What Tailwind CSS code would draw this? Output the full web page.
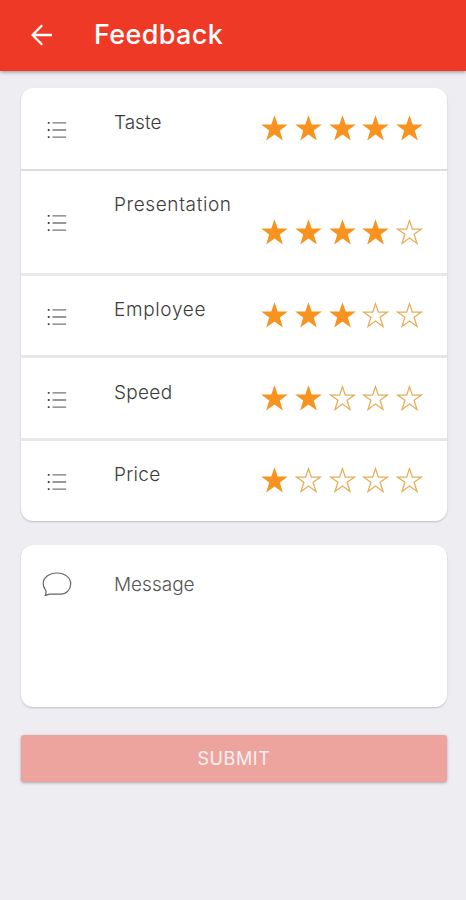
<!DOCTYPE html>
<html lang="en">
<head>
<meta charset="utf-8">
<title>Feedback</title>
<script src="https://cdn.jsdelivr.net/npm/@tailwindcss/browser@4"></script>
</head>
<body class="h-[900px] overflow-hidden bg-[#eeeef2] font-['Inter','Open_Sans',sans-serif] text-[#3c3c3c]">
<svg class="hidden">
  <symbol id="list" viewBox="0 0 20 18"><path d="M5.5 1.8H19.2M5.5 9H19.2M5.5 16.2H19.2" fill="none" stroke="#777" stroke-width="1.3"/><path d="M.8 .9h1.8v1.8H.8zM.8 8.1h1.8v1.8H.8zM.8 15.3h1.8v1.8H.8z" fill="#444"/></symbol>
  <symbol id="full" viewBox="0 0 27 26"><path d="M13.5 .2L16.7 9.6H26.8L18.8 15.4L21.8 25.4L13.5 19.5L5.2 25.4L8.2 15.4L.2 9.6H10.3Z" fill="#f7931e"/></symbol>
  <symbol id="empty" viewBox="0 0 27 26"><path d="M13.5 1.6L16.3 10H25.5L18.1 15.3L21 24.5L13.5 19.1L6 24.5L8.9 15.3L1.5 10H10.7Z" fill="none" stroke="#e6ad58" stroke-width="1.25"/></symbol>
</svg>
<header class="flex h-[71px] items-center bg-[#ee3926] pl-[31px] text-white shadow-[0_1px_4px_rgba(0,0,0,.4)]">
  <svg class="-mt-[2px] h-[22px] w-[22px]" viewBox="0 0 22 22" fill="none" stroke="white" stroke-width="2.3"><path d="M21 11H2M11.2 1.3L1.6 11L11.2 20.7"/></svg>
  <h1 class="-mt-[1px] ml-[41px] text-[27px] leading-[36px] font-medium tracking-[0.35px]">Feedback</h1>
</header>
<main class="pt-[17px] pr-[19px] pl-[21px]">
  <section class="h-[433px] overflow-hidden rounded-[12px] bg-white text-[19px] leading-[24px] font-light shadow-[0_1px_2px_rgba(0,0,0,.2)]">
    <div class="flex h-[83px] border-b-2 border-[#dcdcdc] pl-[26px]">
      <svg class="mt-[32.5px] h-[18px] w-[20px]"><use href="#list"/></svg>
      <span class="mt-[23px] ml-[47px] w-[147px]">Taste</span>
      <div class="mt-[26.5px] flex gap-[6.8px]"><svg class="h-[26px] w-[27px]"><use href="#full"/></svg><svg class="h-[26px] w-[27px]"><use href="#full"/></svg><svg class="h-[26px] w-[27px]"><use href="#full"/></svg><svg class="h-[26px] w-[27px]"><use href="#full"/></svg><svg class="h-[26px] w-[27px]"><use href="#full"/></svg></div>
    </div>
    <div class="flex h-[104.5px] border-b-3 border-[#e8e8e8] pl-[26px]">
      <svg class="mt-[43px] h-[18px] w-[20px]"><use href="#list"/></svg>
      <span class="mt-[22px] ml-[47px] w-[147px] tracking-[0.62px]">Presentation</span>
      <div class="mt-[48.4px] flex gap-[6.8px]"><svg class="h-[26px] w-[27px]"><use href="#full"/></svg><svg class="h-[26px] w-[27px]"><use href="#full"/></svg><svg class="h-[26px] w-[27px]"><use href="#full"/></svg><svg class="h-[26px] w-[27px]"><use href="#full"/></svg><svg class="h-[26px] w-[27px]"><use href="#empty"/></svg></div>
    </div>
    <div class="flex h-[82.5px] border-b-3 border-[#e8e8e8] pl-[26px]">
      <svg class="mt-[32.5px] h-[18px] w-[20px]"><use href="#list"/></svg>
      <span class="mt-[22.5px] ml-[47px] w-[147px] tracking-[0.65px]">Employee</span>
      <div class="mt-[26.5px] flex gap-[6.8px]"><svg class="h-[26px] w-[27px]"><use href="#full"/></svg><svg class="h-[26px] w-[27px]"><use href="#full"/></svg><svg class="h-[26px] w-[27px]"><use href="#full"/></svg><svg class="h-[26px] w-[27px]"><use href="#empty"/></svg><svg class="h-[26px] w-[27px]"><use href="#empty"/></svg></div>
    </div>
    <div class="flex h-[83px] border-b-3 border-[#e8e8e8] pl-[26px]">
      <svg class="mt-[32.5px] h-[18px] w-[20px]"><use href="#list"/></svg>
      <span class="mt-[23px] ml-[47px] w-[147px] tracking-[0.3px]">Speed</span>
      <div class="mt-[26.5px] flex gap-[6.8px]"><svg class="h-[26px] w-[27px]"><use href="#full"/></svg><svg class="h-[26px] w-[27px]"><use href="#full"/></svg><svg class="h-[26px] w-[27px]"><use href="#empty"/></svg><svg class="h-[26px] w-[27px]"><use href="#empty"/></svg><svg class="h-[26px] w-[27px]"><use href="#empty"/></svg></div>
    </div>
    <div class="flex pl-[26px]">
      <svg class="mt-[32px] h-[18px] w-[20px]"><use href="#list"/></svg>
      <span class="mt-[22px] ml-[47px] w-[147px] tracking-[0.3px]">Price</span>
      <div class="mt-[26px] flex gap-[6.8px]"><svg class="h-[26px] w-[27px]"><use href="#full"/></svg><svg class="h-[26px] w-[27px]"><use href="#empty"/></svg><svg class="h-[26px] w-[27px]"><use href="#empty"/></svg><svg class="h-[26px] w-[27px]"><use href="#empty"/></svg><svg class="h-[26px] w-[27px]"><use href="#empty"/></svg></div>
    </div>
  </section>
  <section class="mt-[24px] flex h-[162px] rounded-[12px] bg-white pl-[21px] shadow-[0_1px_2px_rgba(0,0,0,.2)]">
    <svg class="mt-[27px] h-[25px] w-[30px]" viewBox="0 0 30 25" fill="none" stroke="#666" stroke-width="1.2"><path d="M3.2 23.5C4.6 20.8 4.2 18.8 3 17.2C1.7 15.2 1.2 13.5 1.2 11.5C1.2 5.7 7.2 1 15 1S28.7 5.7 28.7 11.8C28.7 17.5 24.5 22.2 18.5 22.2H7.5C6 22.2 4.6 23.5 3.2 23.5Z"/></svg>
    <span class="mt-[28px] ml-[42px] text-[19px] leading-[24px] font-light text-[#555]">Message</span>
  </section>
  <button class="mt-[28px] block h-[47px] w-full rounded-[3px] bg-[#eda49f] text-[18px] tracking-[0.6px] text-white/85 shadow-[0_1px_3px_rgba(0,0,0,.3)]">SUBMIT</button>
</main>
</body>
</html>
